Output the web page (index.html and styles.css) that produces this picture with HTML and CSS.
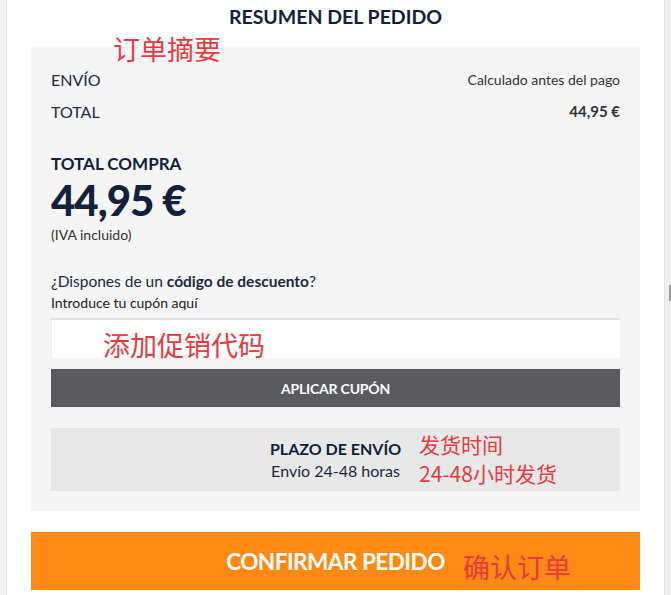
FILE: index.html
```html
<!DOCTYPE html>
<html>
  <head>
    <meta charset="utf-8" />
    <title>Resumen del pedido</title>
    <link rel="stylesheet" href="styles.css">
  </head>
  <body>
    <div class="page">
      <div class="edge-left"></div>

      <div class="main">
        <h2 class="title">RESUMEN DEL PEDIDO</h2>

        <div class="summary">
          <div class="row">
            <span class="row-label">ENVÍO</span>
            <span class="row-value">Calculado antes del pago</span>
          </div>
          <div class="row">
            <span class="row-label">TOTAL</span>
            <span class="row-value strong">44,95 €</span>
          </div>

          <div class="total-block">
            <div class="total-label">TOTAL COMPRA</div>
            <div class="total-price">44,95 €</div>
            <div class="tax">(IVA incluido)</div>
          </div>

          <div class="coupon">
            <p class="coupon-question">¿Dispones de un <strong>código de descuento</strong>?</p>
            <label class="coupon-label">Introduce tu cupón aquí</label>
            <div class="coupon-input"></div>
            <button class="btn-coupon">APLICAR CUPÓN</button>
          </div>

          <div class="shipping">
            <div class="shipping-title">PLAZO DE ENVÍO</div>
            <div class="shipping-text">Envío 24-48 horas</div>
          </div>
        </div>

        <button class="btn-confirm">CONFIRMAR PEDIDO</button>

        <!-- notas añadidas sobre la captura -->
        <span class="note note-summary">订单摘要</span>
        <span class="note note-coupon">添加促销代码</span>
        <span class="note note-ship1">发货时间</span>
        <span class="note note-ship2">24-48小时发货</span>
        <span class="note note-confirm">确认订单</span>
      </div>

      <div class="edge-right">
        <div class="thumb"></div>
      </div>
    </div>
  </body>
</html>
```

FILE: styles.css
```css
html, body {
  margin: 0;
  padding: 0;
}
body {
  background: #fff;
  font-family: Lato, "Noto Sans", sans-serif;
  color: #23293d;
}
.page {
  display: flex;
  min-height: 595px;
}
.edge-left {
  width: 6px;
  background: #f2f2f2;
  border-right: 1px solid #e6e6e6;
}
.edge-right {
  width: 6px;
  background: #efefef;
  border-left: 1px solid #e4e4e4;
  display: flex;
  justify-content: flex-end;
}
.thumb {
  width: 2px;
  height: 16px;
  margin-top: 285px;
  background: #9a9a9a;
}
.main {
  flex: 1;
  position: relative;
  padding: 0 24px;
}
.title {
  margin: 0;
  height: 47px;
  line-height: 34px;
  font-size: 19.5px;
  font-weight: 700;
  text-align: center;
  color: #14203b;
}
.summary {
  background: #f5f5f5;
  padding: 16px 20px 20px;
}
.row {
  display: flex;
  justify-content: space-between;
  align-items: center;
  height: 32px;
}
.row-label {
  font-size: 16px;
  color: #23293d;
}
.row-value {
  font-size: 14px;
  color: #333;
}
.row-value.strong {
  font-size: 15px;
  font-weight: 700;
}
.total-block {
  margin-top: 27px;
}
.total-label {
  font-size: 17px;
  font-weight: 700;
  line-height: 20px;
  color: #14203b;
}
.total-price {
  font-size: 42px;
  font-weight: 900;
  line-height: 52px;
  letter-spacing: -1px;
  color: #14203b;
}
.tax {
  font-size: 14px;
  line-height: 18px;
  color: #333;
}
.coupon {
  margin-top: 27px;
}
.coupon-question {
  margin: 0;
  font-size: 15.5px;
  line-height: 20px;
  color: #23293d;
}
.coupon-question strong {
  font-weight: 700;
}
.coupon-label {
  display: block;
  margin-top: 3px;
  font-size: 14px;
  line-height: 18px;
  color: #222;
}
.coupon-input {
  margin-top: 6px;
  height: 38px;
  background: #fff;
  border-top: 2px solid #e2e2e2;
  border-left: 1px solid #ececec;
}
.btn-coupon {
  display: block;
  width: 100%;
  height: 38px;
  margin-top: 11px;
  border: none;
  background: #5b5b5f;
  color: #fff;
  font-family: Lato, sans-serif;
  font-size: 14px;
  font-weight: 700;
  letter-spacing: -0.2px;
}
.shipping {
  margin-top: 21px;
  height: 63px;
  background: #e8e8e8;
  display: flex;
  flex-direction: column;
  align-items: center;
  justify-content: center;
}
.shipping-title {
  font-size: 16px;
  font-weight: 700;
  line-height: 22px;
  color: #14203b;
}
.shipping-text {
  font-size: 16px;
  line-height: 22px;
  color: #23293d;
}
.btn-confirm {
  display: block;
  width: 100%;
  height: 58px;
  margin-top: 21px;
  border: none;
  background: #fe8a15;
  color: #fff;
  font-family: Lato, sans-serif;
  font-size: 22.5px;
  font-weight: 700;
  letter-spacing: -0.5px;
}
.note {
  position: absolute;
  font-family: "Noto Sans CJK SC", sans-serif;
  color: #e83a3f;
  white-space: nowrap;
  line-height: 1;
}
.note-summary {
  left: 106px;
  top: 35px;
  font-size: 27px;
}
.note-coupon {
  left: 96px;
  top: 331px;
  font-size: 27px;
}
.note-ship1 {
  left: 412px;
  top: 434px;
  font-size: 21px;
}
.note-ship2 {
  left: 412px;
  top: 463px;
  font-size: 21px;
}
.note-confirm {
  left: 456px;
  top: 553px;
  font-size: 27px;
}
```
